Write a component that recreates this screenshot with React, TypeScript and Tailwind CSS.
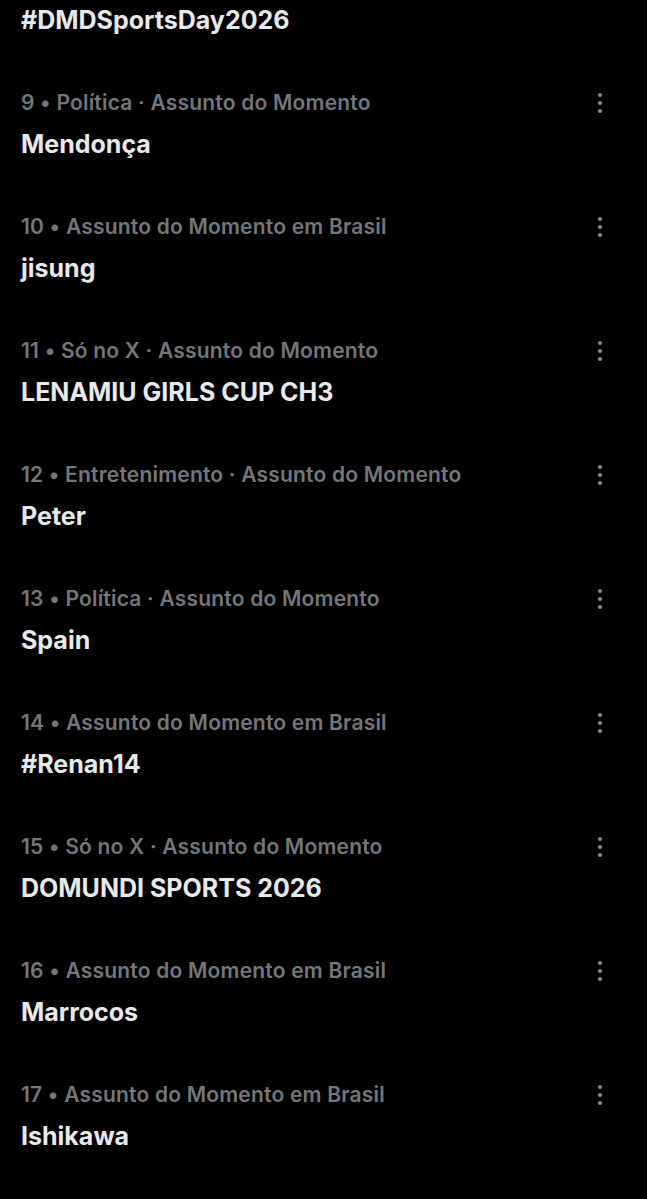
const trends = [
  { meta: "9 • Política · Assunto do Momento", title: "Mendonça" },
  { meta: "10 • Assunto do Momento em Brasil", title: "jisung" },
  { meta: "11 • Só no X · Assunto do Momento", title: "LENAMIU GIRLS CUP CH3" },
  { meta: "12 • Entretenimento · Assunto do Momento", title: "Peter" },
  { meta: "13 • Política · Assunto do Momento", title: "Spain" },
  { meta: "14 • Assunto do Momento em Brasil", title: "#Renan14" },
  { meta: "15 • Só no X · Assunto do Momento", title: "DOMUNDI SPORTS 2026" },
  { meta: "16 • Assunto do Momento em Brasil", title: "Marrocos" },
  { meta: "17 • Assunto do Momento em Brasil", title: "Ishikawa" },
];

function MoreIcon() {
  return (
    <svg width="20" height="24" viewBox="0 0 20 24" className="mt-[1px] text-[#85898d]">
      <circle cx="10" cy="4" r="2.1" fill="currentColor" />
      <circle cx="10" cy="12" r="2.1" fill="currentColor" />
      <circle cx="10" cy="20" r="2.1" fill="currentColor" />
    </svg>
  );
}

export default function App() {
  return (
    <div
      className="min-h-[1199px] w-full bg-black text-[#e7e9ea]"
      style={{ fontFamily: "Inter, 'Noto Sans', sans-serif" }}
    >
      <div className="px-[21px] pt-1">
        <h2 className="text-[25px] leading-8 font-bold">#DMDSportsDay2026</h2>
      </div>

      {trends.map((t) => (
        <div key={t.meta} className="flex items-start justify-between pl-[21px] pr-[37px] pt-[54px]">
          <div className="flex flex-col">
            <div className="text-[21px] leading-6 font-semibold tracking-[0.2px] text-[#73777c] pt-[1px]">{t.meta}</div>
            <div className="mt-[13px] text-[25px] leading-8 font-bold">{t.title}</div>
          </div>
          <MoreIcon />
        </div>
      ))}
    </div>
  );
}
